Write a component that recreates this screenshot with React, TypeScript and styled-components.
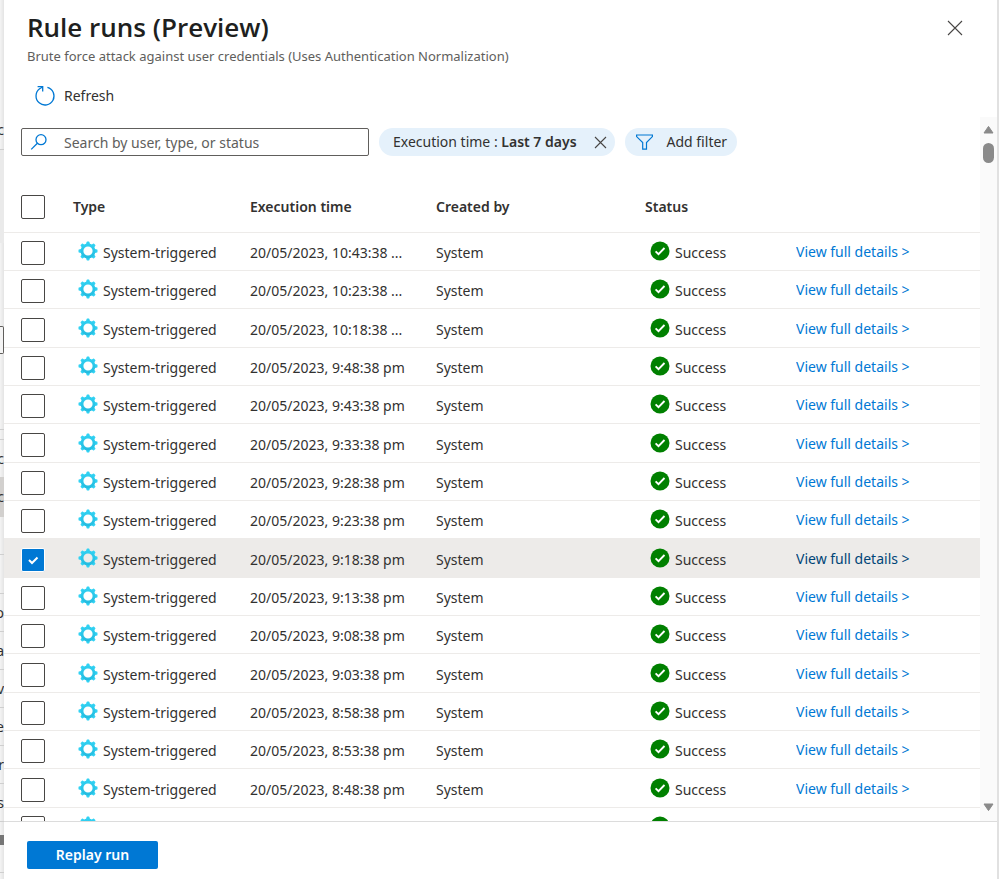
import React, { useState } from "react";
import styled, { createGlobalStyle } from "styled-components";

const GlobalStyle = createGlobalStyle`
  *, *::before, *::after { box-sizing: border-box; }
  body {
    margin: 0;
    background: #ffffff;
    color: #323130;
    font: 14px/20px "Noto Sans", "Open Sans", sans-serif;
  }
  button, input { font: inherit; color: inherit; }
`;

const Page = styled.div`
  display: flex;
  height: 100vh;
  overflow: hidden;
`;

const Underlay = styled.aside`
  display: flex;
  flex-direction: column;
  width: 4px;
  flex: none;
  overflow: hidden;
  background: linear-gradient(to right, #f4f4f4, #e4e4e4);
`;

const UnderlaySlot = styled.div<{ $height: number; $line?: boolean; $fill?: string }>`
  display: flex;
  flex: none;
  align-items: center;
  justify-content: flex-end;
  height: ${(p) => p.$height}px;
  overflow: hidden;
  background: ${(p) => p.$fill ?? "transparent"};
  border-bottom: ${(p) => (p.$line ? "1px solid #cfcfcf" : "none")};
`;

const UnderlayField = styled.div`
  flex: none;
  height: 28px;
  border: 1px solid #605e5c;
  border-left: none;
  border-radius: 0 2px 2px 0;
  background: #f4f4f4;
`;

const Panel = styled.main`
  display: flex;
  flex: 1;
  flex-direction: column;
  min-width: 0;
  border-right: 2px solid #e1e1e1;
`;

const Header = styled.header`
  display: flex;
  justify-content: space-between;
  align-items: flex-start;
  padding: 9px 34px 0 23px;
`;

const Title = styled.h1`
  margin: 0;
  color: #201f1e;
  font-family: "Open Sans", "Noto Sans", sans-serif;
  font-size: 26px;
  line-height: 36px;
  font-weight: 600;
`;

const Subtitle = styled.p`
  margin: 0;
  color: #605e5c;
  font-size: 13px;
  line-height: 22px;
`;

const IconButton = styled.button`
  display: flex;
  flex: none;
  padding: 0;
  border: none;
  background: none;
  cursor: pointer;
`;

const CloseButton = styled(IconButton)`
  margin-top: 11px;
`;

const CommandBar = styled.div`
  display: flex;
  padding: 18px 30px 10px;
`;

const RefreshButton = styled(IconButton)`
  align-items: center;
  gap: 8px;
`;

const ScrollArea = styled.section`
  display: flex;
  flex: 1;
  min-height: 0;
`;

const ScrollContent = styled.div`
  flex: 1;
  min-width: 0;
  overflow: hidden;
`;

const ScrollTrack = styled.div`
  display: flex;
  flex-direction: column;
  align-items: center;
  width: 17px;
  padding: 8px 0 9px;
  background: #fafafa;
`;

const ScrollThumb = styled.div`
  width: 11px;
  height: 20px;
  margin: 9px 0 auto;
  border-radius: 6px;
  background: #8a8a8a;
`;

const FilterBar = styled.div`
  display: flex;
  align-items: center;
  gap: 10px;
  padding: 11px 17px 0;
`;

const SearchBox = styled.label`
  display: flex;
  align-items: center;
  gap: 16px;
  width: 348px;
  height: 28px;
  padding: 0 8px;
  border: 1px solid #605e5c;
  border-radius: 2px;
`;

const SearchInput = styled.input`
  flex: 1;
  min-width: 0;
  padding: 2px 0 0;
  border: none;
  outline: none;
  background: none;
  &::placeholder { color: #605e5c; opacity: 1; }
`;

const Pill = styled.div`
  display: flex;
  align-items: center;
  height: 28px;
  gap: 17px;
  padding: 0 8px 0 14px;
  border-radius: 14px;
  background: #e5f1fb;
  white-space: nowrap;
  strong { font-weight: 600; }
`;

const PillButton = styled.button`
  display: flex;
  align-items: center;
  height: 28px;
  gap: 13px;
  padding: 0 10px;
  border: none;
  border-radius: 14px;
  background: #e5f1fb;
  white-space: nowrap;
  cursor: pointer;
`;

const RunTable = styled.table`
  width: 100%;
  margin-top: 26px;
  border-collapse: separate;
  border-spacing: 0;
  table-layout: fixed;
`;

const Column = styled.col<{ $width?: number }>`
  width: ${(p) => (p.$width ? `${p.$width}px` : "auto")};
`;

const HeadCell = styled.th`
  height: 51px;
  padding: 0;
  border-bottom: 1px solid #edebe9;
  text-align: left;
  color: #323130;
  font-weight: 600;
`;

const Row = styled.tr<{ $selected: boolean }>`
  height: 38px;
  background: ${(p) => (p.$selected ? "#edebe9" : "transparent")};
  &:nth-child(3n) { height: 39px; }
  a { color: ${(p) => (p.$selected ? "#004578" : "#0078d4")}; }
`;

const Cell = styled.td`
  padding: 3px 0 0;
  border-bottom: 1px solid #edebe9;
  white-space: nowrap;
  overflow: hidden;
`;

const LinkCell = styled(Cell)`
  padding-top: 1px;
`;

const IconText = styled.span`
  display: flex;
  align-items: center;
  gap: 5px;
  padding-left: 5px;
  svg { flex: none; margin-bottom: 4px; }
`;

const DetailsLink = styled.a`
  text-decoration: none;
`;

const CheckBox = styled.input`
  display: block;
  appearance: none;
  width: 24px;
  height: 24px;
  margin: 0 0 0 17px;
  border: 1px solid #484644;
  border-radius: 2px;
  background: #ffffff;
  &:checked {
    border-color: #ffffff;
    background: #0078d4
      url("data:image/svg+xml,%3Csvg xmlns='http://www.w3.org/2000/svg' viewBox='0 0 22 22'%3E%3Cpath d='M7 11l3 3 5.5-5.5' fill='none' stroke='white' stroke-width='2'/%3E%3C/svg%3E");
  }
`;

const Footer = styled.footer`
  display: flex;
  flex: none;
  padding: 19px 23px 10px;
  border-top: 1px solid #dcdcdc;
`;

const PrimaryButton = styled.button`
  width: 131px;
  height: 28px;
  border: none;
  border-radius: 2px;
  background: #0078d4;
  color: #ffffff;
  font-weight: 600;
  cursor: pointer;
`;

const CrossIcon = ({ size }: { size: number }) => (
  <svg width={size} height={size} viewBox={`0 0 ${size} ${size}`} aria-hidden="true">
    <path
      d={`M1 1L${size - 1} ${size - 1}M${size - 1} 1L1 ${size - 1}`}
      stroke="#484644"
      strokeWidth="1.1"
      fill="none"
    />
  </svg>
);

const RefreshIcon = () => (
  <svg width="22" height="22" viewBox="0 0 22 22" fill="none" stroke="#0078d4" strokeWidth="1.3" aria-hidden="true">
    <path d="M13.4 2.3A9 9 0 1 1 5.6 3.8L8.6 2" />
    <path d="M3.6 1.7H8.7V6.4" />
  </svg>
);

const SearchIcon = () => (
  <svg width="18" height="18" viewBox="0 0 18 18" fill="none" stroke="#0078d4" strokeWidth="1.3" aria-hidden="true">
    <circle cx="11" cy="6.7" r="5" />
    <path d="M7.4 10.3L1.2 16.4" />
  </svg>
);

const FilterIcon = () => (
  <svg width="19" height="18" viewBox="0 0 19 18" fill="none" stroke="#0078d4" strokeWidth="1.2" aria-hidden="true">
    <path d="M1.6 2H17.4V3.6L11.5 9.6V16.2H7.7V9.6L1.6 3.6Z" />
  </svg>
);

const GearIcon = () => (
  <svg width="20" height="20" viewBox="0 0 20 20" aria-hidden="true">
    <defs>
      <linearGradient id="gear" x1="0" y1="0" x2="0" y2="20" gradientUnits="userSpaceOnUse">
        <stop offset="0" stopColor="#32d4f5" />
        <stop offset="1" stopColor="#22b8dc" />
      </linearGradient>
    </defs>
    <g fill="url(#gear)">
      {[0, 45, 90, 135, 180, 225, 270, 315].map((angle) => (
        <path key={angle} d="M7.8 4L8.6 0.9Q8.7 0.5 9.1 0.5H10.9Q11.3 0.5 11.4 0.9L12.2 4Z" transform={`rotate(${angle} 10 10)`} />
      ))}
    </g>
    <circle cx="10" cy="10" r="6" fill="none" stroke="url(#gear)" strokeWidth="2.8" />
  </svg>
);

const SuccessIcon = () => (
  <svg width="20" height="20" viewBox="0 0 20 20" aria-hidden="true">
    <circle cx="10" cy="10" r="9.5" fill="#008000" />
    <path d="M5.6 10.3L8.5 13.2L14.5 7" fill="none" stroke="#ffffff" strokeWidth="1.9" />
  </svg>
);

const ScrollArrow = ({ down }: { down?: boolean }) => (
  <svg width="11" height="9" viewBox="0 0 11 9" aria-hidden="true">
    <path
      d={down ? "M1 1H10L5.5 7.6Z" : "M1 8H10L5.5 1.4Z"}
      fill="#8a8a8a"
      stroke="#8a8a8a"
      strokeLinejoin="round"
    />
  </svg>
);

const times = [
  "10:43:38 ...", "10:23:38 ...", "10:18:38 ...", "9:48:38 pm", "9:43:38 pm", "9:33:38 pm",
  "9:28:38 pm", "9:23:38 pm", "9:18:38 pm", "9:13:38 pm", "9:08:38 pm", "9:03:38 pm",
  "8:58:38 pm", "8:53:38 pm", "8:48:38 pm", "8:43:38 pm",
];

const coveredRows = ["o", "a", "v", "e", "r", "s"];

export default function App() {
  const [selected, setSelected] = useState<number[]>([8]);
  const toggle = (index: number) =>
    setSelected((current) =>
      current.includes(index) ? current.filter((i) => i !== index) : [...current, index]
    );

  return (
    <Page>
      <GlobalStyle />
      <Underlay aria-hidden="true">
        <UnderlaySlot $height={111} />
        <UnderlaySlot $height={39} $line>c</UnderlaySlot>
        <UnderlaySlot $height={93} $fill="#eaeaea" />
        <UnderlaySlot $height={83} />
        <UnderlayField />
        <UnderlaySlot $height={76} $line />
        <UnderlaySlot $height={10} $line />
        <UnderlaySlot $height={37}>c</UnderlaySlot>
        <UnderlaySlot $height={40} $fill="#d2d0ce">c</UnderlaySlot>
        <UnderlaySlot $height={38} $line />
        <UnderlaySlot $height={39} $line />
        {coveredRows.map((letter) => (
          <UnderlaySlot key={letter} $height={38} $line>{letter}</UnderlaySlot>
        ))}
        <UnderlaySlot $height={13} />
        <UnderlaySlot $height={10} $fill="#767676" />
        <UnderlaySlot $height={28} $line />
      </Underlay>
      <Panel>
        <Header>
          <div>
            <Title>Rule runs (Preview)</Title>
            <Subtitle>Brute force attack against user credentials (Uses Authentication Normalization)</Subtitle>
          </div>
          <CloseButton aria-label="Close"><CrossIcon size={16} /></CloseButton>
        </Header>
        <CommandBar>
          <RefreshButton><RefreshIcon />Refresh</RefreshButton>
        </CommandBar>
        <ScrollArea>
          <ScrollContent>
            <FilterBar>
              <SearchBox>
                <SearchIcon />
                <SearchInput aria-label="Search" placeholder="Search by user, type, or status" />
              </SearchBox>
              <Pill>
                <span>Execution time : <strong>Last 7 days</strong></span>
                <IconButton aria-label="Remove filter"><CrossIcon size={13} /></IconButton>
              </Pill>
              <PillButton><FilterIcon />Add filter</PillButton>
            </FilterBar>
            <RunTable>
              <colgroup>
                <Column $width={69} />
                <Column $width={177} />
                <Column $width={186} />
                <Column $width={209} />
                <Column $width={151} />
                <Column />
              </colgroup>
              <thead>
                <tr>
                  <HeadCell><CheckBox type="checkbox" aria-label="Select all" /></HeadCell>
                  <HeadCell>Type</HeadCell>
                  <HeadCell>Execution time</HeadCell>
                  <HeadCell>Created by</HeadCell>
                  <HeadCell>Status</HeadCell>
                  <HeadCell />
                </tr>
              </thead>
              <tbody>
                {times.map((time, index) => (
                  <Row key={time} $selected={selected.includes(index)}>
                    <Cell>
                      <CheckBox
                        type="checkbox"
                        aria-label={`Select run at ${time}`}
                        checked={selected.includes(index)}
                        onChange={() => toggle(index)}
                      />
                    </Cell>
                    <Cell><IconText><GearIcon />System-triggered</IconText></Cell>
                    <Cell>20/05/2023, {time}</Cell>
                    <Cell>System</Cell>
                    <Cell><IconText><SuccessIcon />Success</IconText></Cell>
                    <LinkCell><DetailsLink href="#">View full details &gt;</DetailsLink></LinkCell>
                  </Row>
                ))}
              </tbody>
            </RunTable>
          </ScrollContent>
          <ScrollTrack aria-hidden="true">
            <ScrollArrow />
            <ScrollThumb />
            <ScrollArrow down />
          </ScrollTrack>
        </ScrollArea>
        <Footer>
          <PrimaryButton>Replay run</PrimaryButton>
        </Footer>
      </Panel>
    </Page>
  );
}
